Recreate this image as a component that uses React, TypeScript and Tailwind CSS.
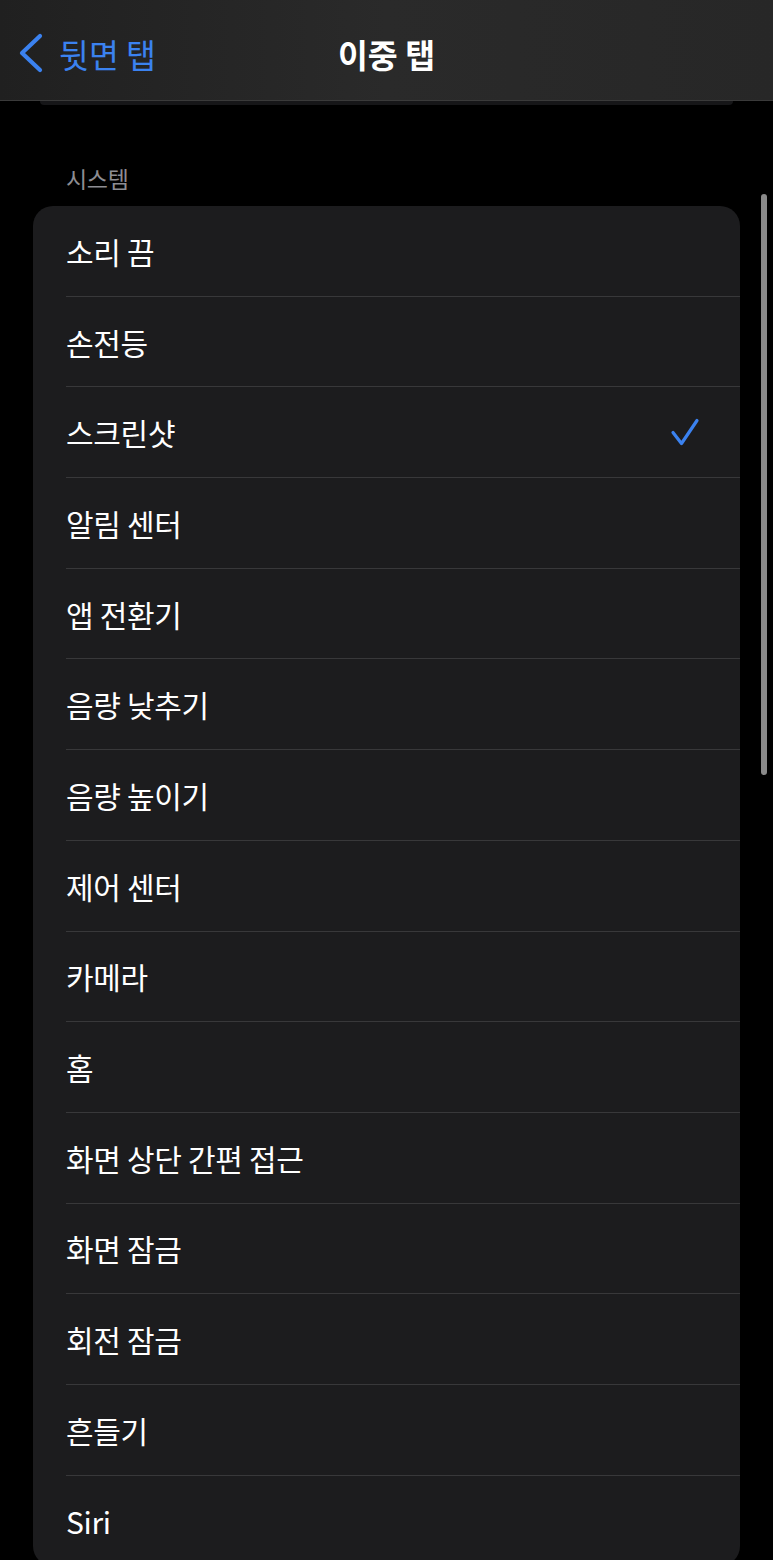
// 이중 탭 — 시스템 동작 선택 화면

const items = [
  "소리 끔",
  "손전등",
  "스크린샷",
  "알림 센터",
  "앱 전환기",
  "음량 낮추기",
  "음량 높이기",
  "제어 센터",
  "카메라",
  "홈",
  "화면 상단 간편 접근",
  "화면 잠금",
  "회전 잠금",
  "흔들기",
  "Siri",
];

const selected = "스크린샷";

function Check() {
  return (
    <svg width="30" height="30" viewBox="0 0 30 30" fill="none" stroke="#3b82f0" strokeWidth={3.2} strokeLinecap="round" strokeLinejoin="round">
      <path d="M3 15.5l8.5 11L27 3.5" />
    </svg>
  );
}

export default function App() {
  return (
    <div
      className="relative w-[773px] h-[1560px] overflow-hidden bg-black text-white"
      style={{ fontFamily: '"Noto Sans CJK KR", "Noto Sans", sans-serif' }}
    >
      {/* 상단 내비게이션 바 */}
      <header className="h-[101px] pt-[8px] grid grid-cols-[1fr_auto_1fr] items-center bg-gradient-to-r from-[#202020] via-[#2a2a2a] to-[#272727] border-b border-[#3a3a3a]">
        <div className="flex items-center pl-[18px] gap-[15px] text-[#3b82f0]">
          <svg width="26" height="40" viewBox="0 0 26 40" fill="none" stroke="currentColor" strokeWidth={4.2} strokeLinecap="round" strokeLinejoin="round" className="-mt-[2px]">
            <path d="M22 3L4 20l18 17" />
          </svg>
          <span className="text-[32.5px] leading-none tracking-[0px]">뒷면 탭</span>
        </div>
        <h1 className="text-[32.5px] leading-none font-semibold tracking-[0px]">이중 탭</h1>
        <div />
      </header>

      {/* 이전 섹션 카드의 하단 가장자리 */}
      <div className="mx-[40px] h-[4px] rounded-b-[14px] bg-[#161618]" />

      <p className="mt-[62px] pl-[66px] text-[23px] leading-none text-[#8d8d93] tracking-[-0.3px]">
        시스템
      </p>

      <div className="mt-[16px] mx-[33px] rounded-[20px] bg-[#1c1c1e] overflow-hidden">
        {items.map((item, i) => (
          <div key={item} className="pl-[33px]">
            <div
              className={`h-[90.7px] flex items-center justify-between pr-[40px] ${
                i < items.length - 1 ? "border-b border-[#38383a]" : ""
              }`}
            >
              <span className="text-[30px] leading-none tracking-[-0.3px] text-white">{item}</span>
              {item === selected && <Check />}
            </div>
          </div>
        ))}
      </div>

      {/* 스크롤 표시줄 */}
      <div className="absolute right-[6px] top-[194px] w-[6px] h-[581px] rounded-full bg-[#8a8a8a]" />
    </div>
  );
}
